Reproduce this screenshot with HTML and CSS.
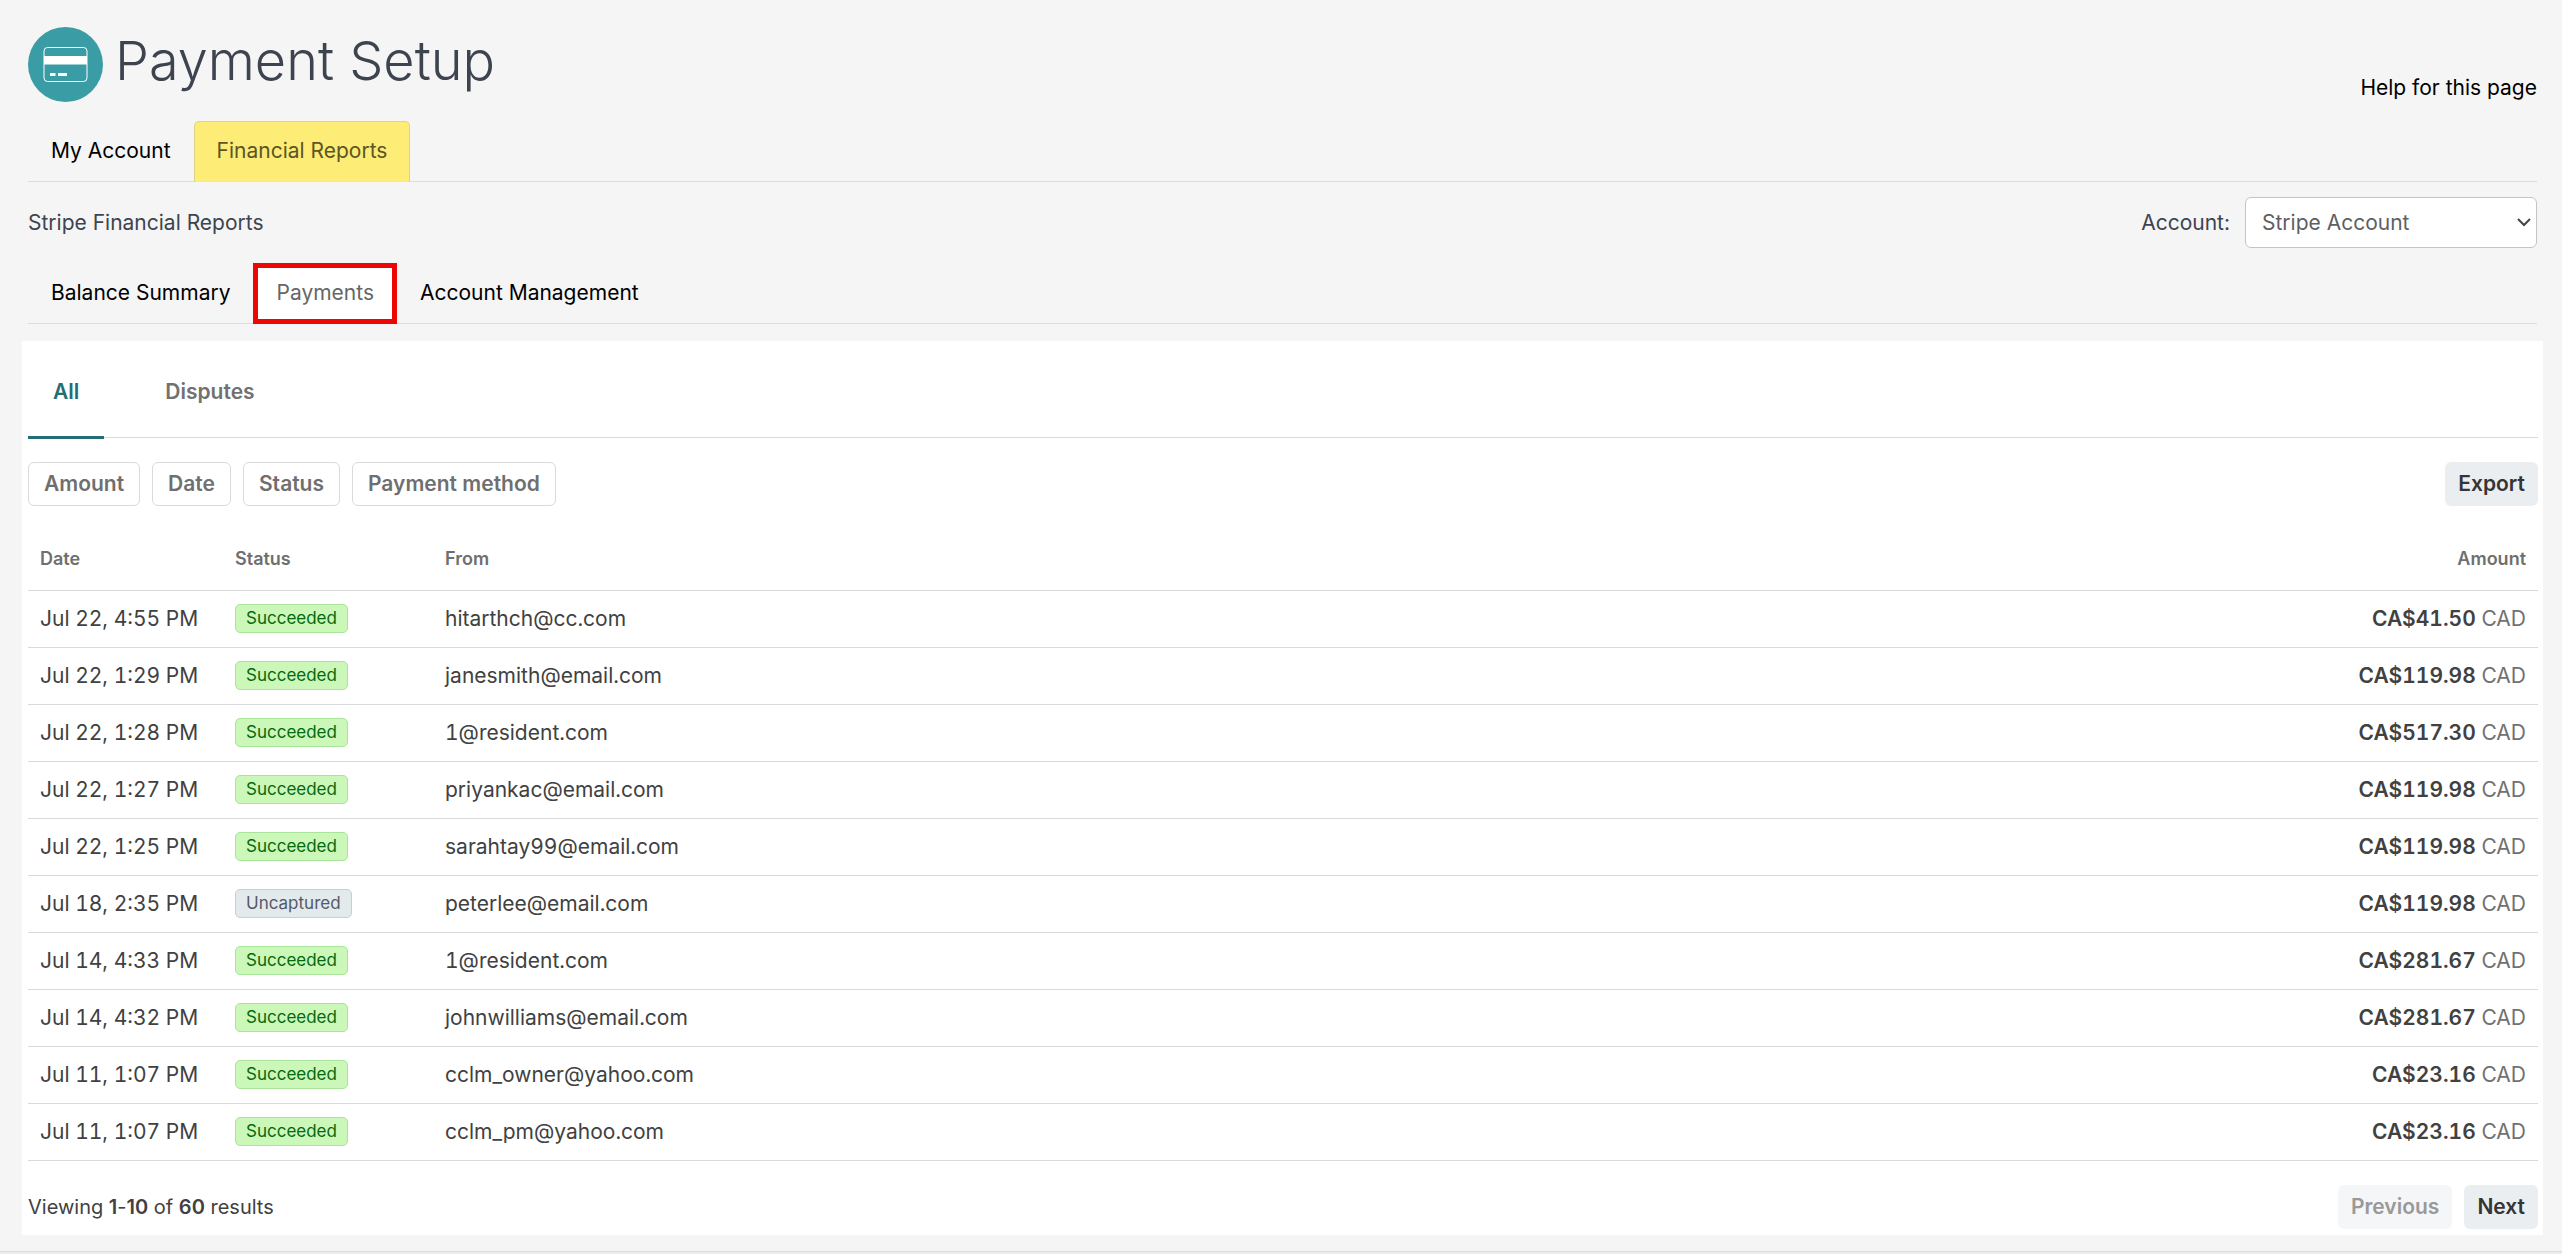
FILE: index.html
```html
<!DOCTYPE html>
<html lang="en">
<head>
    <meta charset="UTF-8">
    <meta name="viewport" content="width=device-width, initial-scale=1.0">
    <title>Payment Setup</title>
    <link rel="stylesheet" href="styles.css">
</head>
<body>

    <div class="page">
        <!-- Page title -->
        <header class="page-header">
            <svg class="page-icon" viewBox="0 0 75 75" aria-hidden="true">
                <circle cx="37.5" cy="37.5" r="37.5" fill="#3a9da5"/>
                <rect x="16" y="20.5" width="43" height="34" rx="3.5" fill="none" stroke="#fff"/>
                <rect x="16" y="29" width="43" height="8.5" fill="#fff"/>
                <path d="M22 46h5.500v3h-5.500zM30 46h9v3h-9z" fill="#fff"/>
            </svg>
            <h1>Payment Setup</h1>
            <a class="help" href="#">Help for this page</a>
        </header>

        <!-- Main tabs -->
        <nav class="tabs">
            <a class="tab" href="#">My Account</a>
            <a class="tab highlight" href="#">Financial Reports</a>
        </nav>

        <div class="account-bar">
            <span>Stripe Financial Reports</span>
            <div class="account-picker">
                <label for="account">Account:</label>
                <div class="select-wrap">
                    <select id="account">
                        <option>Stripe Account</option>
                    </select>
                    <svg class="chevron" viewBox="0 0 14 9" aria-hidden="true">
                        <path d="M1 1l6 6 6-6" fill="none" stroke="#444" stroke-width="2"/>
                    </svg>
                </div>
            </div>
        </div>

        <!-- Report tabs -->
        <nav class="tabs report-tabs">
            <a class="tab" href="#">Balance Summary</a>
            <a class="tab outlined" href="#">Payments</a>
            <a class="tab" href="#">Account Management</a>
        </nav>
    </div>

    <main class="panel">
        <div class="views">
            <button class="view active">All</button>
            <button class="view">Disputes</button>
        </div>

        <div class="toolbar">
            <div class="filters">
                <button class="filter">Amount</button>
                <button class="filter">Date</button>
                <button class="filter">Status</button>
                <button class="filter">Payment method</button>
            </div>
            <button class="btn">Export</button>
        </div>

        <table>
            <thead>
                <tr><th class="date">Date</th><th class="status">Status</th><th>From</th><th class="amount">Amount</th></tr>
            </thead>
            <tbody>
                <tr><td>Jul 22, 4:55 PM</td><td><span class="badge">Succeeded</span></td><td>hitarthch@cc.com</td><td class="amount"><b>CA$41.50</b> CAD</td></tr>
                <tr><td>Jul 22, 1:29 PM</td><td><span class="badge">Succeeded</span></td><td>janesmith@email.com</td><td class="amount"><b>CA$119.98</b> CAD</td></tr>
                <tr><td>Jul 22, 1:28 PM</td><td><span class="badge">Succeeded</span></td><td>1@resident.com</td><td class="amount"><b>CA$517.30</b> CAD</td></tr>
                <tr><td>Jul 22, 1:27 PM</td><td><span class="badge">Succeeded</span></td><td>priyankac@email.com</td><td class="amount"><b>CA$119.98</b> CAD</td></tr>
                <tr><td>Jul 22, 1:25 PM</td><td><span class="badge">Succeeded</span></td><td>sarahtay99@email.com</td><td class="amount"><b>CA$119.98</b> CAD</td></tr>
                <tr><td>Jul 18, 2:35 PM</td><td><span class="badge uncaptured">Uncaptured</span></td><td>peterlee@email.com</td><td class="amount"><b>CA$119.98</b> CAD</td></tr>
                <tr><td>Jul 14, 4:33 PM</td><td><span class="badge">Succeeded</span></td><td>1@resident.com</td><td class="amount"><b>CA$281.67</b> CAD</td></tr>
                <tr><td>Jul 14, 4:32 PM</td><td><span class="badge">Succeeded</span></td><td>johnwilliams@email.com</td><td class="amount"><b>CA$281.67</b> CAD</td></tr>
                <tr><td>Jul 11, 1:07 PM</td><td><span class="badge">Succeeded</span></td><td>cclm_owner@yahoo.com</td><td class="amount"><b>CA$23.16</b> CAD</td></tr>
                <tr><td>Jul 11, 1:07 PM</td><td><span class="badge">Succeeded</span></td><td>cclm_pm@yahoo.com</td><td class="amount"><b>CA$23.16</b> CAD</td></tr>
            </tbody>
        </table>

        <!-- Pagination -->
        <div class="pagination">
            <span class="results">Viewing <b>1</b>-<b>10</b> of <b>60</b> results</span>
            <div class="pager">
                <button class="btn" disabled>Previous</button>
                <button class="btn">Next</button>
            </div>
        </div>
    </main>

    <footer></footer>

</body>
</html>
```
FILE: styles.css
```css
* {
    box-sizing: border-box;
}

body {
    margin: 0;
    font-family: Inter, "Liberation Sans", sans-serif;
    font-size: 21px;
    line-height: 28px;
    color: #3d4450;
    background-color: #f5f5f5;
}

a {
    color: #000;
    text-decoration: none;
}

button,
select {
    font: inherit;
}

b {
    font-weight: 600;
}

.page {
    padding: 27px 25px 0 28px;
}

.page-header {
    display: flex;
    align-items: center;
    height: 75px;
}

.page-icon {
    width: 75px;
    height: 75px;
}

h1 {
    flex: 1;
    margin: 0 0 8px 12px;
    font-size: 54px;
    line-height: 60px;
    font-weight: 300;
}

.help {
    align-self: flex-end;
}

/* Tabs */
.tabs {
    display: flex;
    margin-top: 19px;
    border-bottom: 1px solid #dcdcdc;
}

.tab {
    height: 61px;
    margin-bottom: -1px;
    padding: 15px 22px;
    border: 1px solid transparent;
}

.highlight {
    color: #5c5524;
    background-color: #fdec76;
    border-color: #dfd386;
    border-bottom: none;
    border-radius: 5px 5px 0 0;
}

.report-tabs {
    margin-top: 15px;
}

.outlined {
    padding: 11px 18px;
    color: #666;
    background-color: #fff;
    border: 5px solid #ec0606;
}

/* Account selection */
.account-bar {
    display: flex;
    justify-content: space-between;
    align-items: center;
    margin-top: 15px;
}

.account-picker {
    display: flex;
    align-items: center;
    gap: 15px;
}

.select-wrap {
    position: relative;
}

select {
    display: block;
    width: 292px;
    height: 51px;
    padding: 0 16px;
    color: #5f5f5f;
    background-color: #fff;
    border: 1px solid #c4c4c4;
    border-radius: 6px;
    appearance: none;
}

.chevron {
    position: absolute;
    top: 21px;
    right: 6px;
    width: 14px;
    height: 9px;
    pointer-events: none;
}

/* Payments panel */
.panel {
    margin: 17px 19px 0 22px;
    padding: 0 5px 6px 6px;
    background-color: #fff;
}

.views {
    display: flex;
    gap: 36px;
    border-bottom: 1px solid #d8dadc;
}

.view {
    height: 98px;
    margin-bottom: -2px;
    padding: 6px 25px 0;
    font-weight: 600;
    color: #717171;
    background: none;
    border: none;
    border-bottom: 3px solid transparent;
}

.active {
    color: #236d74;
    border-bottom-color: #236d74;
}

.toolbar {
    display: flex;
    justify-content: space-between;
    margin-top: 24px;
}

.filters,
.pager {
    display: flex;
    gap: 12px;
}

.filter,
.btn {
    height: 44px;
    font-weight: 600;
    border-radius: 6px;
    cursor: pointer;
}

.filter {
    padding: 0 15px;
    color: #6f6f6f;
    background-color: #fff;
    border: 1px solid #d8dadc;
}

.btn {
    padding: 0 13px;
    color: #353535;
    background-color: #ebeef1;
    border: none;
}

.btn:disabled {
    color: #999;
    background-color: #f5f6f8;
}

table {
    width: 100%;
    margin-top: 23px;
    border-collapse: collapse;
    color: #414141;
    font-variant-numeric: tabular-nums;
}

th,
td {
    height: 57px;
    padding: 0 12px;
    text-align: left;
    border-bottom: 1px solid #d8dadc;
}

th {
    height: 61px;
    font-size: 18px;
    font-weight: 600;
    color: #6f6f6f;
}

.date {
    width: 195px;
}

.status {
    width: 210px;
}

.amount {
    text-align: right;
}

td.amount {
    color: #717171;
}

.amount b {
    color: #414141;
}

.badge {
    display: block;
    width: fit-content;
    padding: 0 10px;
    font-size: 17px;
    line-height: 27px;
    color: #05690d;
    background-color: #cbf7b9;
    border: 1px solid #a8e59a;
    border-radius: 5px;
}

.uncaptured {
    color: #545969;
    background-color: #e3eaeb;
    border-color: #c5d0d3;
}

.pagination {
    display: flex;
    justify-content: space-between;
    align-items: center;
    margin-top: 24px;
    color: #414141;
}

.results {
    font-size: 20px;
}

footer {
    height: 3px;
    margin-top: 16px;
    background-color: #ececec;
    border-top: 1px solid #dcdcdc;
}
```
